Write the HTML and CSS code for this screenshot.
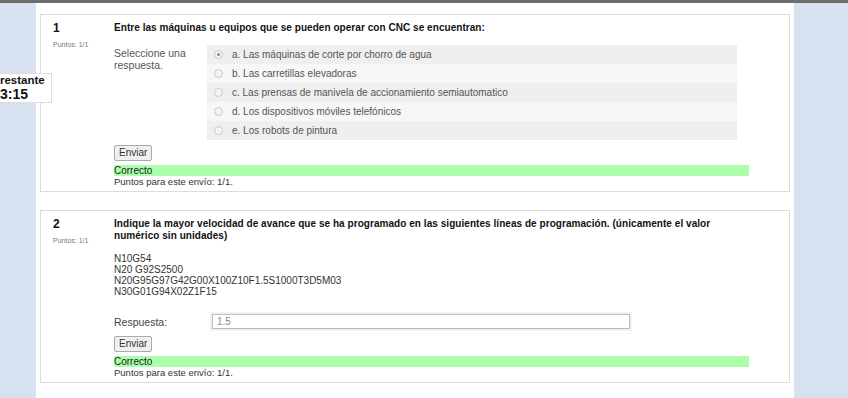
FILE: index.html
```html
<!DOCTYPE html>
<html lang="es">
<head>
<meta charset="utf-8">
<title>Quiz</title>
<link rel="stylesheet" href="styles.css">
</head>
<body>
<div class="topbar"></div>
<div class="layout">
  <aside class="side"></aside>
  <main class="content">
    <section class="que">
      <div class="info">
        <div class="no">1</div>
        <div class="grade">Puntos: 1/1</div>
      </div>
      <div class="formulation">
        <div class="qtext">Entre las máquinas u equipos que se pueden operar con CNC se encuentran:</div>
        <div class="ablock">
          <div class="prompt">Seleccione una<br>respuesta.</div>
          <div class="answer">
            <label class="opt r0"><span class="radio checked"></span>a. Las máquinas de corte por chorro de agua</label>
            <label class="opt r1"><span class="radio"></span>b. Las carretillas elevadoras</label>
            <label class="opt r0"><span class="radio"></span>c. Las prensas de manivela de accionamiento semiautomatico</label>
            <label class="opt r1"><span class="radio"></span>d. Los dispositivos móviles telefónicos</label>
            <label class="opt r0"><span class="radio"></span>e. Los robots de pintura</label>
          </div>
        </div>
        <button class="btn" type="button">Enviar</button>
        <div class="correct">Correcto</div>
        <div class="points">Puntos para este envío: 1/1.</div>
      </div>
    </section>
    <section class="que q2">
      <div class="info">
        <div class="no">2</div>
        <div class="grade">Puntos: 1/1</div>
      </div>
      <div class="formulation">
        <div class="qtext">Indique la mayor velocidad de avance que se ha programado en las siguientes líneas de programación. (únicamente el valor<br>numérico sin unidades)</div>
        <div class="code">N10G54<br>N20 G92S2500<br>N20G95G97G42G00X100Z10F1.5S1000T3D5M03<br>N30G01G94X02Z1F15</div>
        <div class="resp">
          <span class="resp-label">Respuesta:</span>
          <span class="inputwrap"><input class="field" type="text" value="1.5"></span>
        </div>
        <button class="btn" type="button">Enviar</button>
        <div class="correct">Correcto</div>
        <div class="points">Puntos para este envío: 1/1.</div>
      </div>
    </section>
  </main>
  <aside class="side right"></aside>
</div>
<div class="timer">
  <div class="t1">restante</div>
  <div class="t2">3:15</div>
</div>
</body>
</html>
```
FILE: styles.css
```css
* { box-sizing: border-box; }
html, body { margin: 0; padding: 0; }
body {
  font-family: "Liberation Sans", Arial, sans-serif;
  font-size: 11px;
  color: #333;
  background: #d7e1f0;
  height: 398px;
  overflow: hidden;
}
.topbar { height: 3px; background: #6d6d6d; }
.layout { display: flex; height: 395px; }
.side { width: 36px; flex: none; }
.side.right { width: 54px; }
.content {
  flex: 1;
  background: #fff;
  padding: 11px 4px 0 4px;
}
.que {
  display: flex;
  border: 1px solid #dcdcdc;
  background: #fff;
  padding: 6px 0 4px 0;
  margin-bottom: 18px;
}
.info { width: 73px; flex: none; padding-left: 12px; }
.no { font-weight: bold; font-size: 12px; line-height: 14px; color: #111; }
.grade { font-size: 7px; color: #777; margin-top: 6px; }
.formulation { flex: 1; padding-right: 40px; }
.qtext { font-weight: bold; font-size: 10px; line-height: 12px; color: #111; padding-top: 1px; letter-spacing: 0.05px; }
.ablock { display: flex; margin-top: 10px; }
.prompt { width: 93px; color: #555; line-height: 12px; padding-top: 3px; font-size: 10.5px; }
.answer { width: 530px; padding-top: 1px; }
.opt { display: flex; align-items: center; height: 19px; color: #555; font-size: 10px; }
.r0 { background: #efefef; }
.r1 { background: #f7f7f7; }
.radio {
  width: 9px; height: 9px; border-radius: 50%;
  border: 1px solid #c8c8c8; background: #f4f4f4;
  margin: 0 9px 0 7px; flex: none; position: relative;
}
.radio.checked::after {
  content: ""; position: absolute; left: 2px; top: 2px;
  width: 3px; height: 3px; border-radius: 50%; background: #888;
}
.btn {
  display: block;
  margin-top: 5px;
  font-family: inherit; font-size: 10px; color: #333;
  padding: 0 4px; height: 16px; line-height: 14px;
  background: #f0f0f0; border: 1px solid #aaa; border-radius: 2px;
}
.correct {
  margin-top: 4px;
  background: #aaffaa; color: #222;
  height: 11px; line-height: 11px; font-size: 10px;
}
.points { font-size: 9.5px; line-height: 11px; color: #333; }
.code { margin-top: 11px; color: #333; line-height: 11px; font-size: 10px; }
.resp { display: flex; align-items: center; margin-top: 15px; color: #444; font-size: 10.5px; }
.resp-label { width: 96px; }
.inputwrap { display: block; background: #f2f2f2; padding: 2px; }
.field {
  display: block; width: 418px; height: 15px;
  border: 1px solid #bbb; background: #fff; color: #888;
  font-family: inherit; font-size: 10px; padding: 0 4px;
}
.timer {
  position: absolute; left: 0; top: 73px;
  width: 52px; height: 30px;
  background: #fff; border: 1px solid #ddd; border-left: none;
  color: #111; font-weight: bold;
}
.t1 { font-size: 11.5px; line-height: 13px; }
.t2 { font-size: 14px; line-height: 15px; }
```
